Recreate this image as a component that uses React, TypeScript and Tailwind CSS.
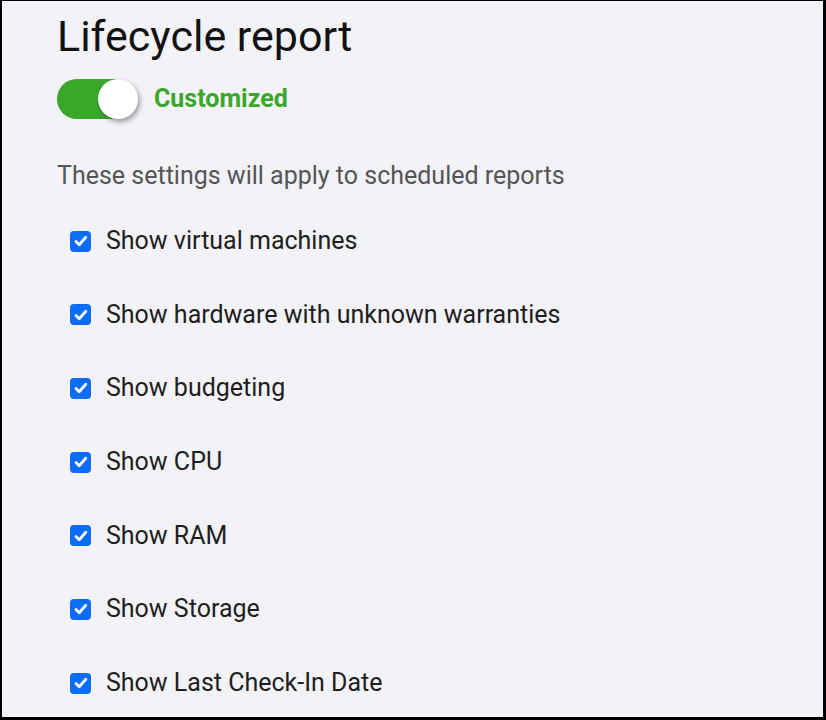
import React from "react";

const items = [
  "Show virtual machines",
  "Show hardware with unknown warranties",
  "Show budgeting",
  "Show CPU",
  "Show RAM",
  "Show Storage",
  "Show Last Check-In Date",
];

function Check() {
  return (
    <span className="flex h-[21px] w-[21px] shrink-0 items-center justify-center rounded-[4px] bg-[#0b6cf5]">
      <svg width="16" height="16" viewBox="0 0 16 16" fill="none">
        <path d="M3 8.5l3.2 3.2 6.6-7.4" stroke="white" strokeWidth="2.8" strokeLinecap="round" strokeLinejoin="round" />
      </svg>
    </span>
  );
}

export default function App() {
  return (
    <div className="h-[720px] w-[826px] overflow-hidden border-t-[1px] border-l-[2px] border-r-[3px] border-b-[3px] border-black bg-[#f2f2f7]" style={{ fontFamily: "Roboto, sans-serif" }}>
      <div className="pl-[55px] pt-[9px]">
        <h1 className="text-[43px] leading-[52px] text-[#121212]">Lifecycle report</h1>
        <div className="mt-[17px] flex items-center gap-[18px]">
          <div className="relative h-[40px] w-[79px] rounded-full bg-[#3aa72a]">
            <span className="absolute right-[-2px] top-[0px] h-[40px] w-[40px] rounded-full bg-white shadow-[2px_3px_5px_rgba(0,0,0,0.35)]" />
          </div>
          <span className="text-[25px] font-bold leading-[30px] text-[#3aa72a]">Customized</span>
        </div>
        <p className="mt-[42px] text-[25px] leading-[30px] text-[#555558]">These settings will apply to scheduled reports</p>
        <div className="mt-[38px] flex flex-col gap-[49.7px] pl-[13px]">
          {items.map((t) => (
            <div key={t} className="flex h-[24px] items-center gap-[15px]">
              <Check />
              <span className="text-[25px] leading-[24px] text-[#1e1e22]">{t}</span>
            </div>
          ))}
        </div>
      </div>
    </div>
  );
}
